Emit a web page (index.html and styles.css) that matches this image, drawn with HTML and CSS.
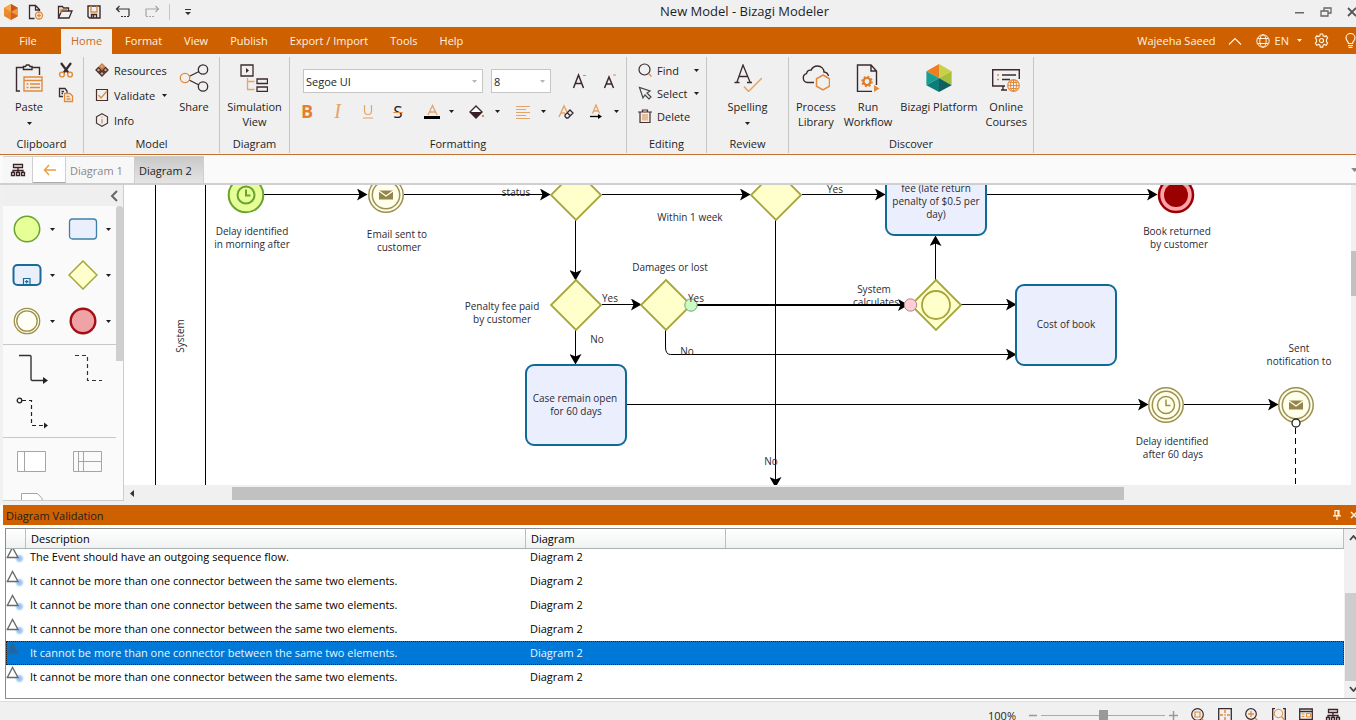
FILE: index.html
```html
<!DOCTYPE html>
<html lang="en">
<head>
<meta charset="utf-8">
<title>New Model - Bizagi Modeler</title>
<link rel="stylesheet" href="styles.css">
</head>
<body>
<svg class="defs" aria-hidden="true">
  <defs>
    <symbol id="caret" viewBox="0 0 5 3"><path d="M0 0h5L2.500 3z" fill="currentColor"/></symbol>
    <symbol id="org" viewBox="0 0 16 14"><path d="M3.500 1.500h9v3h-9zM8 4.500v3M3 9V7.500h10V9M8 7.500V9M1.500 9.500h3v3h-3zM6.500 9.500h3v3h-3zM11.500 9.500h3v3h-3z" fill="none" stroke="#3a2226" stroke-width="1.300"/></symbol>
    <symbol id="warn" viewBox="0 0 20 20">
      <circle cx="14.500" cy="13.500" r="5.500" fill="url(#glow)"/>
      <path d="M7.500 2.500L2.300 12.500H13z" fill="#fff" fill-opacity=".6" stroke="#6b6b6b" stroke-width="1.400"/>
    </symbol>
    <radialGradient id="glow"><stop offset="0" stop-color="#8fc0f0"/><stop offset=".5" stop-color="#a9d0f6"/><stop offset="1" stop-color="#fff" stop-opacity="0"/></radialGradient>
    <marker id="arrow" markerUnits="userSpaceOnUse" markerWidth="12" markerHeight="12" refX="10" refY="6" orient="auto"><path d="M0 0L10.500 6L0 12L2.500 6z" fill="#000"/></marker>
  </defs>
</svg>
<div class="window">
  <header class="titlebar">
    <svg class="logo" width="16" height="18" viewBox="0 0 16 18"><path d="M8 1l7 4v8l-7 4-7-4V5z" fill="#e8842a"/><path d="M8 1l7 4-7 4z" fill="#c9531c"/><path d="M1 5l7-4v8z" fill="#f4a94a"/><path d="M1 5l7 4-7 4z" fill="#ef8d2e"/><path d="M15 5v8L8 9z" fill="#f09a3e"/><path d="M8 9l7 4-7 4z" fill="#d4601b"/></svg>
    <button class="tool" aria-label="New"><svg width="16" height="16" viewBox="0 0 16 16" fill="none" stroke="#3a2a2e" stroke-width="1.300"><path d="M6.500 14.500h-5v-13h6l4 4V7M7.500 1.500V6h4"/><circle cx="11" cy="11.500" r="3.500" stroke="#e08a3c"/><path d="M9 11.500h4M11 9.500v4" stroke="#e08a3c"/></svg></button>
    <button class="tool" aria-label="Open"><svg width="16" height="16" viewBox="0 0 16 16" fill="none" stroke="#3a2a2e" stroke-width="1.300"><path d="M1.500 14V2.500h4l1 1.500h5v3M1.500 14l3-7H15l-3 7z"/><path d="M4 9V5.500h6" stroke="#e08a3c"/></svg></button>
    <button class="tool" aria-label="Save"><svg width="14" height="14" viewBox="0 0 14 14" fill="none" stroke="#3a2a2e" stroke-width="1.400"><path d="M1 1h12v12H2.500L1 11.500z"/><path d="M4 1v6h6V1" stroke="#e08a3c"/><path d="M4.500 13V9.500h5V13M6.500 10v3"/></svg></button>
    <button class="tool" aria-label="Undo"><svg width="16" height="14" viewBox="0 0 16 14" fill="none" stroke="#333" stroke-width="1.200"><path d="M4.500 1L1.500 4l3 3M1.500 4H14v7"/><path d="M14 11.500H6" stroke-dasharray="2 1"/></svg></button>
    <button class="tool" aria-label="Redo"><svg width="16" height="14" viewBox="0 0 16 14" fill="none" stroke="#a5a5a5" stroke-width="1.200"><path d="M11.500 1l3 3-3 3M14.500 4H2v7"/><path d="M2 11.500h8" stroke-dasharray="2 1"/></svg></button>
    <span class="divider"></span>
    <button class="tool" aria-label="Customize"><svg width="6" height="6" viewBox="0 0 6 6"><path d="M0 0h6v1H0zM0 3h6L3 6z" fill="#333"/></svg></button>
    <h1 class="title">New Model - Bizagi Modeler</h1>
    <button class="control" aria-label="Minimize"><svg width="10" height="10" viewBox="0 0 10 10"><path d="M0 5h9v1.500H0z" fill="#666"/></svg></button>
    <button class="control" aria-label="Restore"><svg width="12" height="10" viewBox="0 0 12 10" fill="none" stroke="#666" stroke-width="1.300"><path d="M1 4h7v5H1zM4 4V1h7v5H8"/></svg></button>
    <button class="control" aria-label="Close"><svg width="10" height="10" viewBox="0 0 10 10"><path d="M1 1l8 8M9 1L1 9" stroke="#555" stroke-width="1.800"/></svg></button>
  </header>

  <nav class="menu">
    <button class="file">File</button>
    <button class="active">Home</button>
    <button>Format</button>
    <button>View</button>
    <button>Publish</button>
    <button>Export / Import</button>
    <button>Tools</button>
    <button>Help</button>
    <div class="account">
      <span class="user">Wajeeha Saeed</span>
      <button aria-label="Collapse ribbon"><svg width="14" height="8" viewBox="0 0 14 8"><path d="M1 7.500l6-6 6 6" fill="none" stroke="#fff3e2" stroke-width="1.200"/></svg></button>
      <button class="lang"><svg width="14" height="14" viewBox="0 0 14 14" fill="none" stroke="#fff3e2"><circle cx="7" cy="7" r="6.200"/><ellipse cx="7" cy="7" rx="3.200" ry="6.200"/><path d="M1.500 4.500h11M1.500 9.500h11"/></svg>EN<svg class="caret" width="5" height="3"><use href="#caret"/></svg></button>
      <button aria-label="Settings"><svg width="15" height="15" viewBox="0 0 16 16" fill="none" stroke="#fff3e2" stroke-width="1.200"><circle cx="8" cy="8" r="2.200"/><path d="M6.700 1h2.600l.4 2 1.500.8L13 3l1.600 2.200-1.300 1.600v2.400l1.300 1.600L13 13l-1.800-.8-1.500.8-.4 2H6.700l-.4-2-1.500-.8L3 13l-1.600-2.200 1.300-1.600V6.800L1.400 5.200 3 3l1.800.8L6.300 3z"/></svg></button>
      <button aria-label="Tips"><svg width="11" height="15" viewBox="0 0 11 15" fill="none" stroke="#fff3e2" stroke-width="1.200"><path d="M3.500 10.500C3.500 8.500 1 7.500 1 5a4.500 4.500 0 019 0c0 2.500-2.500 3.500-2.500 5.500zM3 12.500h5M3.500 14.300h4"/></svg></button>
    </div>
  </nav>

  <section class="ribbon">
    <div class="group clipboard">
      <div class="tools">
        <button class="big"><svg width="28" height="28" viewBox="0 0 28 28" fill="none" stroke="#3a2a2e" stroke-width="1.400"><path d="M5 27H1.500V3.500H8M17 3.500h7.500V11M8.500 5.500v-3h2L11.500 1h2.500l1 1.500h2v3z"/><path d="M9 13h18v14H9zM9 16.500h18M11.500 20h2M11.500 23.500h2M15 20h10M15 23.500h10" stroke="#e08a3c"/></svg><span>Paste</span><svg class="caret" width="5" height="3"><use href="#caret"/></svg></button>
        <div class="stack">
          <button class="small" aria-label="Cut"><svg width="16" height="16" viewBox="0 0 16 16" fill="none"><path d="M3 1l7.500 10M13 1L5.500 11" stroke="#3a2a2e" stroke-width="2.200"/><circle cx="4" cy="12.500" r="2.400" stroke="#e08a3c" stroke-width="1.400"/><circle cx="12" cy="12.500" r="2.400" stroke="#e08a3c" stroke-width="1.400"/></svg></button>
          <button class="small" aria-label="Copy"><svg width="16" height="16" viewBox="0 0 16 16" fill="none" stroke="#3a2a2e" stroke-width="1.300"><path d="M5 9.500H1.500v-8H7L9 4v2M3.500 4.500H6M3.500 6.500H5"/><path d="M6.500 6.500H12L14.500 9v5.500h-8zM8.500 9.500h3M8.500 12h4" stroke="#e08a3c"/></svg></button>
        </div>
      </div>
      <h2>Clipboard</h2>
    </div>

    <div class="group model">
      <div class="tools">
        <div class="stack">
          <button class="small"><svg width="14" height="14" viewBox="0 0 14 14" fill="none" stroke="#4a2f2a" stroke-width="1.300"><path d="M7 1l2.500 2.500L7 6 4.500 3.500z" fill="#e9a469" stroke="#c8793c"/><path d="M3.500 4.500L6 7 3.500 9.500 1 7zM10.500 4.500L13 7l-2.500 2.500L8 7zM7 8l2.500 2.500L7 13l-2.500-2.500z" fill="#d5a78a"/></svg>Resources</button>
          <button class="small"><svg width="14" height="14" viewBox="0 0 14 14" fill="none"><path d="M1.500 1.500h11v11h-11z" stroke="#4a2f2a" stroke-width="1.200"/><path d="M3.500 7l2.500 3 6-7" stroke="#e08a3c" stroke-width="1.300"/></svg>Validate<svg class="caret" width="5" height="3"><use href="#caret"/></svg></button>
          <button class="small"><svg width="14" height="14" viewBox="0 0 14 14" fill="none"><path d="M7 .8l5.500 3v6.400l-5.500 3-5.500-3V3.800z" stroke="#4a3a3a" stroke-width="1.200"/><path d="M7 3.500v1.200M7 6v4.500" stroke="#e08a3c" stroke-width="1.200"/></svg>Info</button>
        </div>
        <button class="big"><svg width="30" height="28" viewBox="0 0 30 28" fill="none" stroke="#3a2a2e" stroke-width="1.300"><path d="M10 12.500l10-5M10 16l10 5"/><circle cx="24" cy="5.500" r="4.700"/><circle cx="24" cy="22.500" r="4.700"/><circle cx="6" cy="14" r="4.700" stroke="#e08a3c"/></svg><span>Share</span></button>
      </div>
      <h2>Model</h2>
    </div>

    <div class="group simulation">
      <div class="tools">
        <button class="big"><svg width="28" height="28" viewBox="0 0 28 28" fill="none" stroke="#3a2a2e" stroke-width="1.300"><path d="M1 1h12v11H1zM17 15h10.500v4.500H17zM17 23h10.500v4.500H17z"/><path d="M6 4l3 2.500L6 9z" fill="#3a2a2e" stroke="none"/><path d="M7.500 14v11.500h7M7.500 17.500h7" stroke="#e9a45f"/></svg><span>Simulation<br>View</span></button>
      </div>
      <h2>Diagram</h2>
    </div>

    <div class="group formatting">
      <div class="tools">
        <div class="format-row">
          <label class="combo family"><select aria-label="Font family"><option>Segoe UI</option></select><svg class="caret" width="5" height="3"><use href="#caret"/></svg></label>
          <label class="combo size"><select aria-label="Font size"><option>8</option></select><svg class="caret" width="5" height="3"><use href="#caret"/></svg></label>
          <button class="grow" aria-label="Increase font size"><svg width="15" height="16" viewBox="0 0 15 16" fill="none" stroke="#3a2a2e" stroke-width="1.500"><path d="M1.500 15L6.500 2l5 13M3.500 10.500h6"/><path d="M11 2.500h3" stroke="#e08a3c" stroke-width="1"/></svg></button>
          <button class="shrink" aria-label="Decrease font size"><svg width="14" height="16" viewBox="0 0 14 16" fill="none" stroke="#3a2a2e" stroke-width="1.500"><path d="M1.500 15L6 4l4.500 11M3 11h6"/><path d="M10 2h3" stroke="#e08a3c" stroke-width="1"/></svg></button>
        </div>
        <div class="glyphs">
          <button class="bold">B</button>
          <button class="italic">I</button>
          <button aria-label="Underline"><svg width="12" height="15" viewBox="0 0 12 15" fill="none" stroke="#e5a368" stroke-width="1.200"><path d="M2.500 1v6a3.500 3.500 0 007 0V1M1 14h10"/></svg></button>
          <button class="strike">S</button>
          <button class="apart" aria-label="Font color"><svg width="16" height="15" viewBox="0 0 16 15"><path d="M4 11l4.500-9.500L13 11M5.500 8h6" fill="none" stroke="#e5a368" stroke-width="1.300"/><path d="M0 12h16v3H0z"/></svg></button>
          <button aria-label="Font colors"><svg class="caret" width="5" height="3"><use href="#caret"/></svg></button>
          <button class="apart" aria-label="Fill color"><svg width="16" height="15" viewBox="0 0 16 15"><path d="M7 2l6 6-6 6-6-6z" fill="#fff" stroke="#3a2a2e" stroke-width="1.400"/><path d="M1 8h12l-6 6z" fill="#3a1f26"/><path d="M13 11h2v2h-2z" fill="#e08a3c"/></svg></button>
          <button aria-label="Fill colors"><svg class="caret" width="5" height="3"><use href="#caret"/></svg></button>
          <button class="apart" aria-label="Align"><svg width="14" height="14" viewBox="0 0 14 14"><path d="M0 1.500h14M0 4.500h10M0 7.500h14M0 10.500h10M0 13.500h14" stroke="#e5a368"/></svg></button>
          <button aria-label="Alignments"><svg class="caret" width="5" height="3"><use href="#caret"/></svg></button>
          <button aria-label="Clear format"><svg width="16" height="15" viewBox="0 0 16 15" fill="none"><path d="M1 13L6 2l3 6M3 9h4" stroke="#e5a368" stroke-width="1.400"/><path d="M7 11l5-5 3 3-5 5H8.500L7 12.500zM9.500 9l3 3" stroke="#3a2a2e" stroke-width="1.300"/></svg></button>
          <button aria-label="Text direction"><svg width="14" height="15" viewBox="0 0 14 15" fill="none"><path d="M3.500 9.500L7 1l3.500 8.500M4.500 7h5" stroke="#e5a368" stroke-width="1.300"/><path d="M1 12.500h9" stroke="#000" stroke-width="1.300"/><path d="M9 10l4 2.500L9 15z" fill="#000"/></svg></button>
          <button aria-label="Directions"><svg class="caret" width="5" height="3"><use href="#caret"/></svg></button>
        </div>
      </div>
      <h2>Formatting</h2>
    </div>

    <div class="group editing">
      <div class="tools">
        <div class="stack">
          <button class="small"><svg width="14" height="14" viewBox="0 0 14 14" fill="none"><circle cx="6.500" cy="6.500" r="5.500" stroke="#3a2a2e" stroke-width="1.200"/><path d="M10.500 10.500l3 3" stroke="#e08a3c" stroke-width="1.300"/></svg>Find<svg class="caret" width="5" height="3"><use href="#caret"/></svg></button>
          <button class="small"><svg width="14" height="14" viewBox="0 0 14 14" fill="none"><path d="M1.500 1.500L5 12l2-3 4 4 2-2-4-4 3-2z" stroke="#444" stroke-width="1.200"/></svg>Select<svg class="caret" width="5" height="3"><use href="#caret"/></svg></button>
          <button class="small"><svg width="14" height="14" viewBox="0 0 14 14" fill="none"><path d="M0 3h14M4.500 3V1h5v2M2 3v10.500h10V3" stroke="#4a2f2a" stroke-width="1.200"/><path d="M5 5v6.500M7 5v6.500M9 5v6.500" stroke="#e08a3c"/></svg>Delete</button>
        </div>
      </div>
      <h2>Editing</h2>
    </div>

    <div class="group review">
      <div class="tools">
        <button class="big"><svg width="28" height="28" viewBox="0 0 28 28" fill="none"><path d="M3 18L9 1l7 17M5 12.500h8.500M.500 18.500h5M13 18.500h5" stroke="#3a2a2e" stroke-width="1.300"/><path d="M10 22.500l4.500 5L28 14" stroke="#e5a368" stroke-width="1.500"/></svg><span>Spelling</span><svg class="caret" width="5" height="3"><use href="#caret"/></svg></button>
      </div>
      <h2>Review</h2>
    </div>

    <div class="group discover">
      <div class="tools">
        <button class="big"><svg width="28" height="28" viewBox="0 0 28 28" fill="none"><path d="M12 18.500H5.500a4.500 4.500 0 01-1-8.800C5 7 7 6 9 6.200 10.500 3 13 2 15.500 2c4 0 6.500 3 6.500 6 2 .2 4 2 4.500 4" stroke="#3a2a2e" stroke-width="1.400"/><path d="M21 11l6.500 3.800v7.400L21 26l-6.500-3.800v-7.400z" stroke="#e08a3c" stroke-width="1.500"/></svg><span>Process<br>Library</span></button>
        <button class="big"><svg width="24" height="28" viewBox="0 0 24 28" fill="none"><path d="M16 27.500H1.500V1H15l5.500 6v14M15 1v6h5.500" stroke="#3a2a2e" stroke-width="1.400"/><circle cx="11" cy="17.500" r="3.500" stroke="#e07a25" stroke-width="2.200"/><circle cx="11" cy="17.500" r="5" stroke="#e07a25" stroke-width="1.500" stroke-dasharray="2 1.900"/><path d="M18 21l5.500 3.500L18 28z" fill="#e08a3c"/></svg><span>Run<br>Workflow</span></button>
        <button class="big"><svg width="28" height="31" viewBox="0 0 28 31"><path d="M14 0v15.500L0 8z" fill="#ef7d22"/><path d="M14 0l14 8-14 7.500z" fill="#c8d14a"/><path d="M28 8v15.500l-14-8z" fill="#a6bf3c"/><path d="M0 8v15.500l14-8z" fill="#17a08f"/><path d="M0 23.500L14 31V15.500z" fill="#0e7d7a"/><path d="M28 23.500L14 31V15.500z" fill="#10605c"/></svg><span>Bizagi Platform</span></button>
        <button class="big"><svg width="28" height="28" viewBox="0 0 28 28" fill="none"><path d="M13 22H.700V5.700h26.600V15M9 26h6M11 22v4M10 11h14M10 15.500h8" stroke="#3a2a2e" stroke-width="1.400"/><path d="M5 11h2M5 15.500h2" stroke="#e08a3c" stroke-width="1.600"/><circle cx="21.500" cy="21.500" r="5.800" fill="#f0f0f0" stroke="#e08a3c" stroke-width="1.200"/><path d="M21.500 16v11.500M16 21.500h11.500M17.500 18.500h8M17.500 24.500h8" stroke="#e08a3c"/><ellipse cx="21.500" cy="21.500" rx="3" ry="5.800" stroke="#e08a3c"/></svg><span>Online<br>Courses</span></button>
      </div>
      <h2>Discover</h2>
    </div>
  </section>

  <nav class="tabs">
    <button class="tab icon" aria-label="Diagrams"><svg width="16" height="14"><use href="#org"/></svg></button>
    <button class="tab icon back" aria-label="Back"><svg width="13" height="12" viewBox="0 0 13 12"><path d="M6 1L1.500 6 6 11M1.500 6H13" fill="none" stroke="#e9a040" stroke-width="1.500"/></svg></button>
    <button class="tab">Diagram 1</button>
    <button class="tab current">Diagram 2</button>
    <span class="more"><svg class="caret" width="7" height="4"><use href="#caret"/></svg></span>
  </nav>

  <main class="workspace">
    <aside class="palette">
      <div class="palette-head"><button aria-label="Collapse palette"><svg width="8" height="12" viewBox="0 0 8 12"><path d="M7 1L2 6l5 5" fill="none" stroke="#666" stroke-width="2"/></svg></button></div>
      <div class="palette-body">
        <div class="palette-scroll">
          <div class="shapes">
            <button aria-label="Start event"><svg width="30" height="30" viewBox="0 0 30 30"><circle cx="15" cy="15" r="12.700" fill="#e6ff97" stroke="#6aa32c" stroke-width="1.500"/></svg><svg class="caret" width="5" height="3"><use href="#caret"/></svg></button>
            <button aria-label="Task"><svg width="30" height="30" viewBox="0 0 30 30"><rect x="1.500" y="5" width="27" height="20" rx="3" fill="#e9effb" stroke="#3f80a8" stroke-width="1.300"/></svg><svg class="caret" width="5" height="3"><use href="#caret"/></svg></button>
            <button aria-label="Sub-process"><svg width="30" height="30" viewBox="0 0 30 30"><rect x="1.500" y="5" width="27" height="20" rx="4" fill="#e9effb" stroke="#1b6a99" stroke-width="2"/><path d="M11.500 18.500h6.500V25h-6.500zM14.700 20v3.500M13 21.700h3.500" fill="none" stroke="#1b6a99" stroke-width="1.200"/></svg><svg class="caret" width="5" height="3"><use href="#caret"/></svg></button>
            <button aria-label="Gateway"><svg width="30" height="30" viewBox="0 0 30 30"><path d="M15 1l14 14-14 14L1 15z" fill="#ffffcc" stroke="#a6a63c" stroke-width="1.500"/></svg><svg class="caret" width="5" height="3"><use href="#caret"/></svg></button>
            <button aria-label="Intermediate event"><svg width="30" height="30" viewBox="0 0 30 30" fill="#fffff5" stroke="#9c8f45" stroke-width="1.300"><circle cx="15" cy="15" r="12.700"/><circle cx="15" cy="15" r="10.200"/></svg><svg class="caret" width="5" height="3"><use href="#caret"/></svg></button>
            <button aria-label="End event"><svg width="30" height="30" viewBox="0 0 30 30"><circle cx="15" cy="15" r="12.300" fill="#efa3a6" stroke="#a30f14" stroke-width="2.400"/></svg><svg class="caret" width="5" height="3"><use href="#caret"/></svg></button>
          </div>
          <div class="shapes links">
            <button aria-label="Sequence flow"><svg width="32" height="32" viewBox="0 0 32 32"><path d="M3 3.500h11q1 0 1 1V27q0 1.500 1.500 1.500H28" fill="none" stroke="#333" stroke-width="1.400"/><path d="M27 25l5 3.500-5 3.500z" fill="#222"/></svg></button>
            <button aria-label="Association"><svg width="32" height="32" viewBox="0 0 32 32"><path d="M3 3.500h12.500v25H30" fill="none" stroke="#333" stroke-width="1.200" stroke-dasharray="4 3"/></svg></button>
            <button aria-label="Message flow"><svg width="32" height="32" viewBox="0 0 32 32"><circle cx="3.500" cy="3.500" r="2.300" fill="none" stroke="#222" stroke-width="1.300"/><path d="M6 3.500h9.500v25H29" fill="none" stroke="#222" stroke-width="1.200" stroke-dasharray="4 3"/><path d="M28 25.500l4 3-4 3z" fill="#222"/></svg></button>
          </div>
          <div class="shapes links">
            <button aria-label="Pool"><svg width="30" height="30" viewBox="0 0 30 30"><path d="M1.500 5.500h28v20h-28zM8.500 5.500v20" fill="#fff" stroke="#a5a5a5"/></svg></button>
            <button aria-label="Milestone"><svg width="30" height="30" viewBox="0 0 30 30"><path d="M1.500 5.500h28v20h-28zM6.500 5.500v20M11.500 5.500v20M6.500 15.500H29" fill="none" stroke="#a5a5a5"/></svg></button>
            <button aria-label="Data object"><svg width="30" height="30" viewBox="0 0 30 30"><path d="M5.500 2.500h16l5 5.500-5 8h-16z" fill="#fff" stroke="#a5a5a5"/></svg></button>
          </div>
        </div>
        <div class="palette-track"></div>
      </div>
    </aside>

    <div class="canvas">
      <svg class="diagram" width="1227" height="301" viewBox="124 185 1227 301" preserveAspectRatio="xMinYMin slice">
        <path d="M155.500 180v310M205.500 180v310" stroke="#000"/>
        <text transform="translate(184 336) rotate(-90)">System</text>
        <g class="flow">
          <path d="M264 194.500H367"/><path d="M404 194.500H550"/><path d="M602 194.500H750"/><path d="M802 194.500H885"/><path d="M987 194.500H1157"/>
          <path d="M575.500 219V280"/><path d="M575.500 330V364"/><path d="M602 304.500H641"/><path class="thick" d="M691 305H908"/>
          <path d="M665.500 329V347q0 7.500 5 7.500H1016"/><path d="M775.500 220V487"/><path d="M935.500 280V236"/><path d="M960 304.500H1016"/>
          <path d="M627 404.500H1148"/><path d="M1184 404.500H1278"/>
        </g>
        <path d="M1295.500 428v58" stroke="#000" stroke-dasharray="6 4"/>
        <g class="task"><rect x="886" y="155" width="100" height="80" rx="8"/><rect x="1016" y="285" width="100" height="80" rx="8"/><rect x="526" y="365" width="100" height="80" rx="8"/></g>
        <g class="gateway"><path d="M576 170l25 25-25 25-25-25z"/><path d="M776 170l25 25-25 25-25-25z"/><path d="M576 280l25 25-25 25-25-25z"/><path d="M666 280l25 25-25 25-25-25z"/><path d="M936 280l25 25-25 25-25-25z"/><circle cx="936" cy="305" r="14"/></g>
        <g class="start"><circle cx="246" cy="195" r="17.300"/><circle cx="246" cy="195" r="8.500" fill="none"/><path d="M246 189.500v6h4.500" fill="none"/></g>
        <g class="event"><circle cx="386" cy="195" r="17.200"/><circle cx="386" cy="195" r="13.700"/><circle cx="1166" cy="405" r="17.200"/><circle cx="1166" cy="405" r="13.700"/><circle cx="1166" cy="405" r="8.500"/><path d="M1166 399.500v6h4.500" fill="none"/><circle cx="1296" cy="405" r="17.200"/><circle cx="1296" cy="405" r="13.700"/></g>
        <g fill="#94864a"><path d="M379 190.500h14v9h-14z"/><path d="M1289 400.500h14v9h-14z"/></g>
        <path d="M379 191l7 5 7-5M1289 401l7 5 7-5" fill="none" stroke="#fffff0" stroke-width="1.300"/>
        <circle cx="1176" cy="195" r="17" fill="#ffa3a8" stroke="#9a0008" stroke-width="2.500"/><circle cx="1176" cy="195" r="12" fill="#9a0000"/>
        <circle cx="691" cy="305" r="6.200" fill="#c9fbc5" stroke="#75a078"/>
        <circle cx="910.500" cy="305" r="6.200" fill="#ffcdd6" stroke="#b0848c"/>
        <circle cx="1296" cy="423" r="4" fill="#fff" stroke="#222" stroke-width="1.300"/>
        <g class="labels">
          <text x="252" y="235">Delay identified</text><text x="252" y="248">in morning after</text>
          <text x="397" y="238">Email sent to</text><text x="399" y="251">customer</text>
          <text x="516" y="196">status</text><text x="690" y="221">Within 1 week</text><text x="670" y="271">Damages or lost</text>
          <text x="502" y="310">Penalty fee paid</text><text x="502" y="323">by customer</text>
          <text x="610" y="302">Yes</text><text x="696" y="302">Yes</text><text x="597" y="343">No</text><text x="687" y="355">No</text><text x="771" y="465">No</text>
          <text x="835" y="193">Yes</text><text x="936" y="192">fee (late return</text><text x="936" y="205">penalty of $0.5 per</text><text x="936" y="218">day)</text>
          <text x="874" y="293">System</text>
          <svg x="846" y="294" width="60" height="10"><text x="30" y="12">calculates</text></svg>
          <text x="1066" y="328">Cost of book</text><text x="575" y="402">Case remain open</text><text x="576" y="415">for 60 days</text>
          <text x="1177" y="235">Book returned</text><text x="1179" y="248">by customer</text>
          <text x="1172" y="445">Delay identified</text><text x="1173" y="458">after 60 days</text>
          <text x="1299" y="352">Sent</text><text x="1299" y="365">notification to</text>
        </g>
      </svg>
      <div class="vbar"><svg width="7" height="4" viewBox="0 0 7 4"><path d="M0 4l3.500-4L7 4z" fill="#444"/></svg><span class="vthumb"></span><svg class="end" width="7" height="4" viewBox="0 0 7 4"><path d="M0 0l3.500 4L7 0z" fill="#444"/></svg></div>
      <div class="hbar"><svg width="4" height="7" viewBox="0 0 4 7"><path d="M4 0L0 3.500 4 7z" fill="#333"/></svg><span class="hthumb"></span></div>
    </div>
  </main>

  <section class="validation">
    <header class="panel-head"><h2>Diagram Validation</h2>
      <button aria-label="Pin"><svg width="8" height="10" viewBox="0 0 8 10" fill="none" stroke="#fff3e2" stroke-width="1.200"><path d="M2 0.700h4V5.500H2zM5 1v4M0 5.800h8M4 6v4"/></svg></button>
      <button aria-label="Close panel"><svg width="8" height="8" viewBox="0 0 8 8"><path d="M1 1l6 6M7 1L1 7" stroke="#fff3e2" stroke-width="1.500"/></svg></button>
    </header>
    <div class="list">
      <table>
        <thead><tr><th></th><th>Description</th><th>Diagram</th><th></th></tr></thead>
        <tbody>
          <tr><td><svg width="20" height="20"><use href="#warn"/></svg></td><td>The Event should have an outgoing sequence flow.</td><td>Diagram 2</td></tr>
          <tr><td><svg width="20" height="20"><use href="#warn"/></svg></td><td>It cannot be more than one connector between the same two elements.</td><td>Diagram 2</td></tr>
          <tr><td><svg width="20" height="20"><use href="#warn"/></svg></td><td>It cannot be more than one connector between the same two elements.</td><td>Diagram 2</td></tr>
          <tr><td><svg width="20" height="20"><use href="#warn"/></svg></td><td>It cannot be more than one connector between the same two elements.</td><td>Diagram 2</td></tr>
          <tr class="selected"><td><svg width="20" height="20" viewBox="0 0 20 20"><path d="M7.500 2.500L2.300 12.500H13z" fill="#1a68ab" stroke="#35638c" stroke-width="1.400"/></svg></td><td>It cannot be more than one connector between the same two elements.</td><td>Diagram 2</td></tr>
          <tr><td><svg width="20" height="20"><use href="#warn"/></svg></td><td>It cannot be more than one connector between the same two elements.</td><td>Diagram 2</td></tr>
        </tbody>
      </table>
      <div class="list-bar"><svg width="9" height="6" viewBox="0 0 9 6"><path d="M1 5l3.500-4L8 5" fill="none" stroke="#444" stroke-width="1.800"/></svg><span class="list-thumb"></span><svg width="9" height="6" viewBox="0 0 9 6"><path d="M1 1l3.500 4L8 1" fill="none" stroke="#444" stroke-width="1.800"/></svg></div>
    </div>
  </section>

  <footer class="status">
    <label class="zoom" for="zoom">100%</label>
    <button class="step" aria-label="Zoom out"><svg width="9" height="9" viewBox="0 0 9 9"><path d="M0 4.500h8" stroke="#999" stroke-width="1.500"/></svg></button>
    <input id="zoom" type="range" min="0" max="200" value="100">
    <button class="step" aria-label="Zoom in"><svg width="9" height="9" viewBox="0 0 9 9"><path d="M0 4.500h9M4.500 0v9" stroke="#999" stroke-width="1.500"/></svg></button>
    <div class="views">
      <button aria-label="Zoom to fit"><svg width="14" height="14" viewBox="0 0 14 14" fill="none"><circle cx="6.500" cy="6.500" r="5.800" stroke="#3a2a2e" stroke-width="1.200"/><path d="M4 4h5v5H4zM10.500 10.500l3 3" stroke="#e08a3c" stroke-width="1.200"/></svg></button>
      <button aria-label="Center"><svg width="14" height="14" viewBox="0 0 14 14" fill="none"><path d="M.700.700h12.600v12.600H.700z" stroke="#3a2a2e" stroke-width="1.300"/><path d="M7 2v3M7 9v3M2 7h3M9 7h3M6.300 7h1.400" stroke="#e08a3c" stroke-width="1.500"/></svg></button>
      <button aria-label="Magnify"><svg width="14" height="14" viewBox="0 0 14 14" fill="none"><circle cx="6" cy="6" r="5.300" stroke="#3a2a2e" stroke-width="1.200"/><path d="M3 6h6M6 3v6M10 10l3.500 3.500" stroke="#e08a3c" stroke-width="1.300"/></svg></button>
      <button aria-label="Zoom selection"><svg width="14" height="14" viewBox="0 0 14 14" fill="none"><path d="M3 .700H.700v12.600h12.600V.700H11" stroke="#3a2a2e" stroke-width="1.300"/><circle cx="6.500" cy="5.500" r="4.200" stroke="#e08a3c"/><path d="M9.500 8.500l3.500 4" stroke="#e08a3c" stroke-width="1.200"/></svg></button>
      <button aria-label="Presentation"><svg width="14" height="14" viewBox="0 0 14 14" fill="none"><path d="M.700 1h12.600v10.300H.700zM.700 3.500h12.600M4.500 13.300h5" stroke="#3a2a2e" stroke-width="1.300"/><path d="M2.500 6h3M2.500 8.500h3M7.500 5.500h4v3.500h-4z" stroke="#e08a3c"/></svg></button>
      <button aria-label="Diagrams view"><svg width="16" height="14"><use href="#org"/></svg></button>
    </div>
  </footer>
</div>
</body>
</html>
```
FILE: styles.css
```css
* { box-sizing: border-box; }
body { margin: 0; overflow: hidden; background: #f0f0f0; color: #1e1e1e; font: 11px/15px "Open Sans", "Noto Sans", sans-serif; }
button { display: flex; align-items: center; justify-content: center; margin: 0; padding: 0; border: 0; background: none; color: inherit; font: inherit; }
h1, h2 { margin: 0; font-size: 11px; font-weight: 400; }
svg { display: block; flex: none; }
.defs { position: absolute; width: 0; height: 0; }
/* The window runs slightly past the right and bottom edges of the screen. */
.window { display: flex; flex-direction: column; width: calc(100% + 12px); height: calc(100vh + 8px); }

.titlebar { display: flex; align-items: center; height: 27px; padding: 0 3px 4px 0; }
.logo { margin: 0 2px 0 3px; }
.tool { width: 29px; height: 23px; }
.divider { width: 1px; height: 16px; margin: 0 3px; background: #c4c4c4; }
.title { flex: 1; text-align: center; font-size: 13px; }
.control { width: 26px; }

.menu { display: flex; height: 27px; background: #ce6000; color: #fff3e2; border-top: 2px solid #ce6000; }
.menu > button { padding: 0 11px 2px; }
.menu > .file { width: 61px; padding-right: 16px; }
.menu > .active { padding: 0 10px 2px; margin-right: 2px; background: #f0f0f0; color: #ce6a1c; }
.account { display: flex; align-items: center; gap: 12px; margin-left: auto; padding: 0 12px 2px 0; }
.account .lang { gap: 5px; margin-left: 2px; }
.account .lang .caret { margin-left: 3px; }
.account button:last-child { margin-left: 4px; }

.ribbon { display: flex; height: 101px; padding: 3px 0 1px; border-bottom: 1px solid #c4702e; }
.group { display: flex; flex-direction: column; border-right: 1px solid #c6c6c6; }
.tools { display: flex; flex: 1; padding-top: 2px; }
.group h2 { height: 18px; text-align: center; line-height: 17px; }
.big { flex-direction: column; justify-content: flex-start; gap: 7px; padding-top: 5px; white-space: nowrap; }
.big > svg:first-child { height: 28px; }
.big span { line-height: 15px; }
.big .caret { margin-top: 1px; }
.stack { display: flex; flex-direction: column; gap: 3px; }
.small { height: 22px; gap: 5px; justify-content: flex-start; }
.small .caret { margin-left: 2px; }
.clipboard { width: 84px; }
.clipboard .big { width: 58px; }
.model { width: 136px; }
.model .stack { width: 86px; padding-left: 11px; }
.model .big { width: 48px; }
.simulation { width: 70px; }
.simulation .tools, .review .tools { justify-content: center; }
.formatting { width: 337px; }
.formatting .tools { flex-direction: column; gap: 7px; padding: 12px 0 0 2px; }
.format-row { display: flex; align-items: center; height: 24px; padding-left: 11px; }
.combo { display: flex; flex: none; align-items: center; height: 24px; padding-right: 5px; border: 1px solid #c6c6c6; background: #fff; color: #b5b5b5; }
.combo select { flex: 1; min-width: 0; height: 22px; padding: 0 2px; border: 0; background: none; color: #1e1e1e; font: inherit; appearance: none; }
.family { width: 180px; }
.size { width: 60px; margin-left: 8px; }
.grow { width: 30px; margin-left: 13px; }
.shrink { width: 32px; }
.glyphs { display: grid; grid-template-columns: 30px 31px 30px 30px 32px 12px 34px 12px 34px 12px 34px 26px 14px; height: 22px; }
.glyphs .apart { padding-left: 6px; }
.bold { color: #e08030; font-size: 18px; font-weight: 700; }
.italic { color: #e5a368; font: italic 20px "Liberation Serif", serif; }
.strike { font-size: 17px; text-decoration: line-through; text-decoration-thickness: 1px; text-decoration-color: #e08a3c; }
.editing { width: 80px; }
.editing .stack { width: 79px; gap: 1px; padding: 0 7px 0 11px; }
.editing .caret { margin-left: auto; }
.review { width: 82px; }
.discover { width: 245px; }
.discover .tools { gap: 8px; padding-left: 7px; }

.tabs { display: flex; height: 30px; padding: 1px 0 0 3px; border-bottom: 2px solid #cfcfcf; background: #fafafa; }
.tab { justify-content: flex-start; width: 69px; padding-left: 4px; border: 1px solid #cfcfcf; border-left: 0; border-bottom: 0; background: #f7f7f7; color: #888; }
.tab.icon { justify-content: center; width: 30px; padding: 0; }
.tab.back { width: 33px; background: #fff; border-bottom: 1px solid #aaa; }
.tab.current { background: linear-gradient(#c9c9c9, #e4e4e4); color: #1e1e1e; }
.more { margin: auto 10px auto auto; color: #888; }

.workspace { display: flex; flex: 1; min-height: 0; padding-left: 3px; }
.palette { display: flex; flex-direction: column; width: 121px; border: 1px solid #cdcdcd; border-width: 0 1px 1px 0; background: #fafafa; }
.palette-head { display: flex; justify-content: flex-end; height: 21px; padding-right: 5px; background: #efefef; }
.palette-body { display: flex; flex: 1; min-height: 0; }
.palette-scroll { flex: 1; overflow: hidden; }
.palette-track { width: 7px; height: 155px; background: #cfcfcf; border-radius: 3px 3px 0 0; }
.shapes { display: grid; grid-template-columns: 56px 56px; grid-auto-rows: 46px; }
.shapes button { justify-content: flex-start; gap: 8px; padding-left: 9px; }
.links { border-top: 1px solid #c8c8c8; padding: 0 0 2px 4px; grid-auto-rows: 45px; }
.canvas { display: grid; flex: 1; grid-template-columns: 1fr 17px; grid-template-rows: 1fr 16px; min-width: 0; background: #fff; }
.diagram { width: 100%; height: 100%; min-width: 0; min-height: 0; overflow: hidden; }
.diagram text { fill: #2b2b33; font-size: 10px; text-anchor: middle; }
.flow path { fill: none; stroke: #000; stroke-width: 1; marker-end: url(#arrow); }
.flow .thick { stroke-width: 2; }
.task rect { fill: #ebeffd; stroke: #0f6a95; stroke-width: 2; }
.gateway { fill: #ffffcc; stroke: #a6a63c; stroke-width: 1.8px; }
.start { fill: #e6ff97; stroke: #6aa32c; stroke-width: 2; }
.event { fill: #ffffec; stroke: #9c9150; stroke-width: 1.5px; }
.vbar { display: flex; flex-direction: column; align-items: center; padding: 8px 0 0; background: #f0f0f0; }
.vthumb { width: 17px; height: 45px; margin-top: 54px; background: #c1c1c1; }
.vbar .end { margin-top: auto; }
.hbar { display: flex; align-items: center; padding-left: 6px; grid-column: 1 / -1; background: #f0f0f0; }
.hthumb { width: 892px; height: 13px; margin-left: 98px; background: #c1c1c1; }

.validation { margin-top: 4px; padding: 0 0 2px 3px; background: #fff; }
.panel-head { display: flex; align-items: center; gap: 9px; height: 20px; padding: 0 10px 0 3px; background: #ce6000; color: #1e1e1e; }
.panel-head h2 { flex: 1; }
.list { display: flex; height: 171px; margin: 3px 6px 0 2px; border: 1px solid #8c8c8c; border-right: 0; }
table { display: flex; flex: 1; flex-direction: column; min-width: 0; overflow: hidden; color: #000; }
tr { display: grid; grid-template-columns: 20px 500px 200px 1fr; }
thead { display: block; border-bottom: 1px solid #a9b3b3; }
th { height: 19px; padding: 0 5px; border-right: 1px solid #b5c0c0; background: linear-gradient(#fff, #f0f1f1); font-weight: 400; line-height: 19px; text-align: left; }
tbody { display: block; flex: 1; overflow: hidden; }
tbody tr { height: 24px; }
tbody tr:first-child { margin-top: -4px; }
td { padding: 0 0 0 4px; line-height: 23px; }
td:first-child { padding: 0; }
td svg { margin-left: -1px; }
.selected { outline: 1px dotted #222; outline-offset: -1px; background: #0078d7; color: #e6f6ff; }
.list-bar { display: flex; flex-direction: column; align-items: center; width: 18px; padding: 6px 0; background: #f0f0f0; }
.list-thumb { width: 17px; height: 88px; margin: auto 0 5px; background: #cdcdcd; }

.status { display: flex; flex: none; align-items: center; justify-content: flex-end; height: 27px; padding-right: 22px; border-top: 1px solid #dcdcdc; }
.zoom { margin: 0 12px 0 0; }
.step { width: 10px; }
.status input { width: 124px; height: 14px; margin: 0 3px; background: linear-gradient(#aaa, #aaa) center / 100% 1px no-repeat; appearance: none; }
.status input::-webkit-slider-thumb { width: 9px; height: 11px; background: #999; appearance: none; }
.views { display: flex; margin-left: 6px; }
.views button { width: 27px; }
```
